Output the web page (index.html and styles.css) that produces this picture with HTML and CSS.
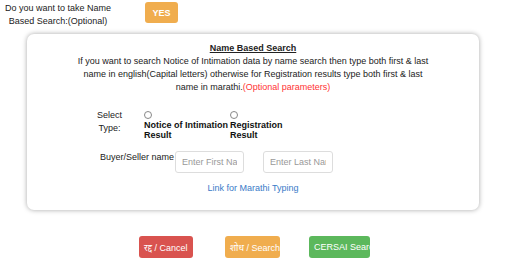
FILE: index.html
```html
<!DOCTYPE html>
<html>
<head>
<meta charset="utf-8">
<link rel="stylesheet" href="styles.css">
</head>
<body>
<div class="top">
  <div class="ask">Do you want to take Name<br>Based Search:(Optional)</div>
  <button class="btn btn-yes">YES</button>
</div>
<div class="card">
  <div class="title">Name Based Search</div>
  <p class="info">If you want to search Notice of Intimation data by name search then type both first &amp; last name in english(Capital letters) otherwise for Registration results type both first &amp; last name in marathi.<span class="opt">(Optional parameters)</span></p>
  <div class="type-row">
    <div class="type-label">Select<br>Type:</div>
    <label class="radio r1"><span class="circle"></span><b class="rtext">Notice of Intimation<br>Result</b></label>
    <label class="radio r2"><span class="circle"></span><b class="rtext">Registration<br>Result</b></label>
  </div>
  <div class="name-row">
    <span class="name-label">Buyer/Seller name</span>
    <input class="inp" type="text" placeholder="Enter First Name">
    <input class="inp inp2" type="text" placeholder="Enter Last Name">
  </div>
  <div class="link-row"><a class="link" href="#">Link for Marathi Typing</a></div>
</div>
<div class="actions">
  <button class="btn btn-cancel">रद्द / Cancel</button>
  <button class="btn btn-search">शोध / Search</button>
  <button class="btn btn-cersai">CERSAI Search</button>
</div>
</body>
</html>
```
FILE: styles.css
```css
html, body {
  margin: 0;
  padding: 0;
  background: #fff;
}
body {
  font-family: "Liberation Sans", Arial, "Noto Sans", sans-serif;
  font-size: 9px;
  color: #222;
  width: 512px;
  height: 278px;
  overflow: hidden;
}
.top {
  display: flex;
  align-items: flex-start;
  padding-top: 2px;
}
.ask {
  width: 116px;
  text-align: center;
  line-height: 13px;
}
.btn {
  border: none;
  border-radius: 3px;
  color: #fff;
  font-family: "Liberation Sans", Arial, "Noto Sans", sans-serif;
  font-size: 9px;
  padding: 0;
  height: 22px;
  overflow: hidden;
  white-space: nowrap;
  text-align: left;
}
.btn-yes {
  margin-left: 29px;
  width: 33px;
  height: 21px;
  background: #f0ad4e;
  font-weight: bold;
  text-align: center;
}
.card {
  margin: 6px 0 0 27px;
  width: 452px;
  height: 176px;
  box-sizing: border-box;
  border-radius: 7px;
  box-shadow: 0 0 5px rgba(0, 0, 0, 0.35);
  padding-top: 8px;
}
.title {
  text-align: center;
  font-weight: bold;
  text-decoration: underline;
  line-height: 13px;
}
.info {
  margin: 0;
  padding: 0 50px;
  text-align: center;
  line-height: 13px;
}
.opt {
  color: #f33;
}
.type-row {
  display: flex;
  align-items: flex-start;
  margin-top: 14px;
  height: 38px;
}
.type-label {
  width: 61px;
  margin-left: 52px;
  text-align: center;
  line-height: 13px;
  padding-top: 1px;
}
.radio {
  display: block;
  line-height: 10px;
  text-align: left;
}
.rtext {
  display: block;
  color: #111;
}
.r1 {
  margin-left: 4px;
  width: 86px;
}
.circle {
  display: block;
  width: 6px;
  height: 6px;
  border: 1px solid #888;
  border-radius: 50%;
  margin-left: 0;
  margin-top: 3px;
  margin-bottom: 1px;
}
.name-row {
  display: flex;
  align-items: flex-start;
  margin-top: 5px;
}
.name-label {
  margin-left: 73px;
  padding-top: 1px;
}
.inp {
  box-sizing: border-box;
  width: 69px;
  height: 22px;
  margin-left: 1px;
  border: 1px solid #ddd;
  border-radius: 3px;
  font-family: "Liberation Sans", Arial, sans-serif;
  font-size: 9px;
  padding: 0 6px;
  color: #555;
}
.inp::placeholder {
  color: #999;
}
.inp2 {
  margin-left: 19px;
  width: 70px;
}
.link-row {
  text-align: center;
  margin-top: 10px;
}
.link {
  color: #3a7bc8;
  text-decoration: none;
}
.actions {
  display: flex;
  margin-top: 26px;
  padding-left: 139px;
}
.btn-cancel {
  background: #d9534f;
  width: 54px;
  padding-left: 5px;
}
.btn-search {
  background: #f0ad4e;
  width: 55px;
  margin-left: 32px;
  padding-left: 5px;
}
.btn-cersai {
  background: #5cb85c;
  width: 61px;
  margin-left: 29px;
  padding-left: 5px;
}
```
